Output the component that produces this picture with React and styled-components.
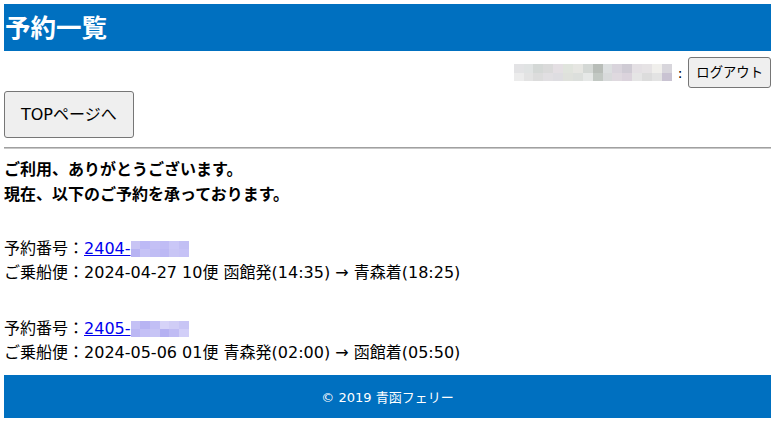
import React from 'react';
import styled, { createGlobalStyle } from 'styled-components';

const GlobalStyle = createGlobalStyle`
body {
    margin: 4px;
    font-family: "DejaVu Sans", "Noto Sans CJK JP", sans-serif;
    color: #000;
    background: #fff;
}
`;

const Header = styled.header`
background: #0070c0;
height: 47px;
display: flex;
align-items: center;
padding: 0 1px;
`;

const Title = styled.h1`
margin: 0;
color: #fff;
font-size: 25.5px;
line-height: 30px;
font-weight: bold;
`;

const UserBar = styled.div`
display: flex;
justify-content: flex-end;
align-items: center;
gap: 6px;
margin-top: 6px;
font-size: 14px;
`;

const Blur = styled.span`
display: inline-block;
overflow: hidden;
width: ${p => p.w}px;
height: ${p => p.h}px;
vertical-align: ${p => p.valign || 'middle'};
`;

const BlurGrid = styled.span`
display: grid;
grid-template-columns: repeat(${p => p.cols}, 1fr);
grid-template-rows: repeat(2, 1fr);
width: 100%;
height: 100%;
`;

const Cell = styled.span`
background: ${p => p.c};
`;

const Button = styled.button`
font-family: "DejaVu Sans", "Noto Sans CJK JP", sans-serif;
background: #efefef;
border: 1px solid #767676;
border-radius: 3px;
color: #000;
font-size: ${p => p.size}px;
height: ${p => p.h}px;
padding: 0 ${p => p.padx}px;
line-height: 1;
cursor: pointer;
`;

const TopRow = styled.div`
margin-top: 3px;
display: flex;
`;

const Rule = styled.hr`
margin: 9px 0 0;
border: none;
border-top: 1px solid #a0a0a0;
height: 1px;
background: #c8c8c8;
`;

const Message = styled.p`
margin: 8px 0 0;
font-weight: bold;
font-size: 16px;
line-height: 25px;
`;

const Booking = styled.p`
margin: ${p => (p.first ? 30 : 32)}px 0 0;
font-size: 16px;
line-height: 24px;
`;

const NumberLink = styled.a`
color: #0000ee;
text-decoration: underline;
`;

const Footer = styled.footer`
margin-top: 10px;
background: #0070c0;
height: 43px;
display: flex;
align-items: center;
justify-content: center;
color: #fff;
font-size: 13px;
`;

const userCells = [
    '#e3e3e5', '#e0e3e3', '#d4d8d6', '#dadada', '#e4dfe3', '#e0e4dd', '#e6e6e2', '#d4d8d5', '#b8bdb8', '#dcdfe0', '#d9d4dc', '#cfcbd4', '#e4e0e4', '#e6e3e5', '#f0efec', '#d8d6dc',
    '#ececec', '#e3e3e3', '#dcdcdc', '#e1dfe2', '#dedde1', '#dfe1dc', '#dcdfdc', '#e6e8e7', '#c2c8c3', '#d8dadb', '#dfd9df', '#dbd3dc', '#e5e5e5', '#dcdcdc', '#e3e3e3', '#c9c3d2',
];

const link1 = [
    '#c8c4f4', '#bdbaf6', '#c4c0f5', '#c0bcf5', '#cac7f7', '#c2bff4', '#b7b3f3', '#c6c3f6', '#c0bdf4', '#bcb8f4', '#c8c5f5', '#c6c2f6',
];
const link2 = [
    '#c4c1f5', '#b8b4f3', '#c2bff5', '#d6d3f8', '#d0cdf6', '#c8c5f5', '#bcb8f4', '#c4c0f6', '#c7c4f5', '#b5b1f2', '#c0bcf4', '#d2cff8',
];

const Mosaic = ({ cells, cols, w, h, valign }) => (
    <Blur w={w} h={h} valign={valign}>
        <BlurGrid cols={cols}>
            {cells.map((c, i) => <Cell key={i} c={c} />)}
        </BlurGrid>
    </Blur>
);

const bookings = [
    { prefix: '2404-', cells: link1, ship: '2024-04-27 10便 函館発(14:35) → 青森着(18:25)' },
    { prefix: '2405-', cells: link2, ship: '2024-05-06 01便 青森発(02:00) → 函館着(05:50)' },
];

export default function App() {
    return (
        <>
            <GlobalStyle />
            <Header>
                <Title>予約一覧</Title>
            </Header>
            <UserBar>
                <Mosaic cells={userCells} cols={16} w={158} h={17} />
                <span>:</span>
                <Button size={13.33} h={31} padx={7}>ログアウト</Button>
            </UserBar>
            <TopRow>
                <Button size={16} h={47} padx={16}>TOPページへ</Button>
            </TopRow>
            <Rule />
            <Message>
                ご利用、ありがとうございます。<br />
                現在、以下のご予約を承っております。
            </Message>
            {bookings.map((b, i) => (
                <Booking key={b.prefix} first={i === 0}>
                    予約番号：<NumberLink href="#">{b.prefix}<Mosaic cells={b.cells} cols={6} w={58} h={16} valign="-3px" /></NumberLink><br />
                    ご乗船便：{b.ship}
                </Booking>
            ))}
            <Footer>© 2019 青函フェリー</Footer>
        </>
    );
}
